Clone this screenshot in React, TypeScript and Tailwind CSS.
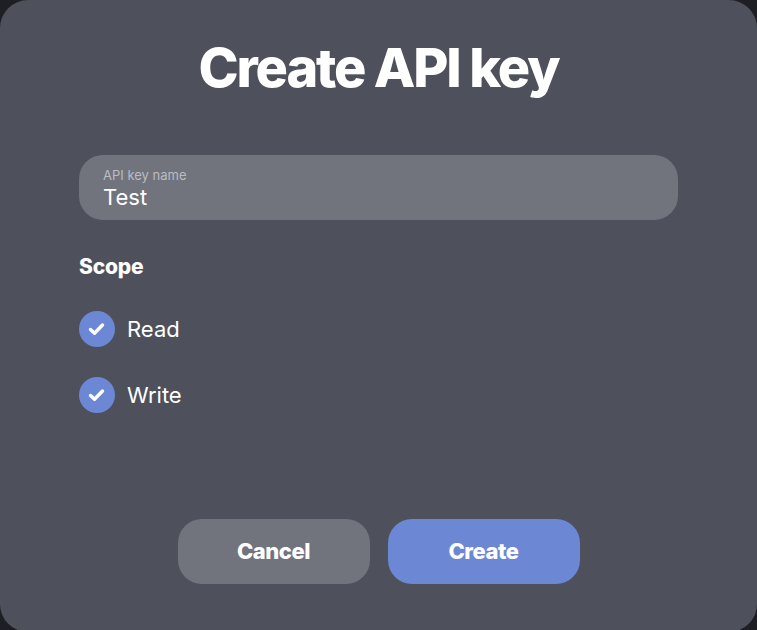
import { useState } from 'react';

const CheckIcon = () => (
  <svg viewBox="0 0 24 24" className="w-[24px] h-[24px]" fill="none" stroke="white" strokeWidth={3.4} strokeLinecap="round" strokeLinejoin="round">
    <path d="M5.5 12.5l4 3.8L17.5 8" />
  </svg>
);

const ScopeRow = ({ label, checked, onToggle }: { label: string; checked: boolean; onToggle: () => void }) => (
  <button type="button" onClick={onToggle} className="flex items-center gap-3 h-9">
    <span className={`flex items-center justify-center w-9 h-9 rounded-full ${checked ? 'bg-[#6c88d4]' : 'bg-[#71747d]'}`}>
      {checked && <CheckIcon />}
    </span>
    <span className="text-[22px] text-white">{label}</span>
  </button>
);

const App = () => {
  const [name, setName] = useState('Test');
  const [read, setRead] = useState(true);
  const [write, setWrite] = useState(true);

  return (
    <div className="w-[757px] h-[630px] bg-[#1e1f24] overflow-hidden font-['Inter',sans-serif]">
      <div className="w-full h-[632px] bg-[#4e515b] rounded-[28px] flex flex-col px-[79px]">
        <h1 className="text-center text-white text-[54px] font-extrabold tracking-[-0.04em] leading-none mt-[41px]">
          Create API key
        </h1>

        {/* name field */}
        <div className="mt-[60px] h-[65px] rounded-[24px] bg-[#71747d] px-6 pt-[12px]">
          <label className="block text-[13px] leading-4 text-[#babcc2]">API key name</label>
          <input
            value={name}
            onChange={(e) => setName(e.target.value)}
            className="block w-full bg-transparent outline-none text-white text-[22px] leading-[29px]"
          />
        </div>

        <h2 className="mt-[35px] text-white text-[21px] font-extrabold tracking-[-0.01em] leading-6">Scope</h2>

        <div className="flex flex-col items-start gap-[30px] mt-[32px]">
          <ScopeRow label="Read" checked={read} onToggle={() => setRead(!read)} />
          <ScopeRow label="Write" checked={write} onToggle={() => setWrite(!write)} />
        </div>

        {/* actions */}
        <div className="flex justify-center gap-[18px] mt-[106px]">
          <button type="button" className="w-[192px] h-[65px] rounded-[24px] bg-[#71747d] text-white text-[22px] font-extrabold tracking-[-0.02em]">
            Cancel
          </button>
          <button type="button" className="w-[192px] h-[65px] rounded-[24px] bg-[#6c88d4] text-white text-[22px] font-extrabold tracking-[-0.02em]">
            Create
          </button>
        </div>
      </div>
    </div>
  );
};

export default App;
